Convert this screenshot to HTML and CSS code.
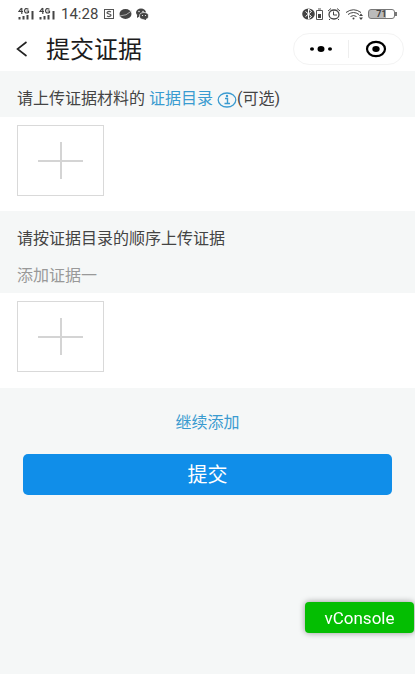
FILE: index.html
```
<!DOCTYPE html>
<html lang="zh-CN">
<head>
<meta charset="utf-8">
<meta name="viewport" content="width=device-width, initial-scale=1">
<title>提交证据</title>
<link rel="stylesheet" href="styles.css">
</head>
<body>
<div class="status">
  <div class="status-group">
    <svg width="38" height="14" viewBox="0 0 38 14" aria-hidden="true">
      <g id="signal" fill="none" stroke="#444">
        <path d="M3.5 1L1 4.500h4M3.800 1v6M10.500 2.200Q7 .3 6.500 3.800Q7 7 10.500 5.500V4H8.500" stroke-width="1.200"/>
        <path d="M1.500 10v2.500M5.500 9v3.500M9.500 8v4.500M14.500 4v8.500" stroke-width="2"/>
      </g>
      <use href="#signal" x="21"/>
    </svg>
    <time class="clock">14:28</time>
    <svg width="46" height="12" viewBox="0 0 46 12" aria-hidden="true">
      <path d="M1 1.500h10M1 10.500h10M1.500 1v10M10.500 1v10" fill="none" stroke="#555"/>
      <path d="M8 4Q6 2.800 4.500 4T6 6t1.500 2T4 8" fill="none" stroke="#555" stroke-width="1.200"/>
      <ellipse cx="22.500" cy="6" rx="6" ry="5" fill="#444"/>
      <path d="M16.500 8q7 0 12-5" fill="none" stroke="#aaa"/>
      <ellipse cx="38" cy="4.500" rx="5" ry="4" fill="#444"/>
      <path d="M34 7v3l3-2z" fill="#444"/>
      <ellipse cx="41" cy="8" rx="4.500" ry="3.500" fill="#444" stroke="#fff" stroke-width=".7"/>
      <path d="M43 10v2l-3-1z" fill="#444"/>
      <g fill="#fff"><circle cx="36" cy="3.500" r=".7"/><circle cx="40" cy="3.500" r=".7"/><circle cx="39.500" cy="7.500" r=".6"/><circle cx="42.500" cy="7.500" r=".6"/></g>
    </svg>
  </div>
  <div class="status-group">
    <svg width="61" height="12" viewBox="0 0 61 12" aria-hidden="true">
      <ellipse cx="6.500" cy="6" rx="6.300" ry="5.500" fill="#444"/>
      <path d="M3.500 3.500l6 5L6.500 11V1l3 2.500-6 5" fill="none" stroke="#fff"/>
      <path d="M14.500 2.500h6v9h-6zM16 1h3" fill="#fff" stroke="#555"/>
      <path d="M16 6h3v4h-3z" fill="#444"/>
      <g fill="none" stroke="#444"><ellipse cx="32" cy="6.500" rx="5" ry="4.500" stroke-width="1.300"/><path d="M31.500 3.500v3.500H35M26 3l3-2.500M38 3l-3-2.500M28 11l-1 1M36 11l1 1"/>
      <path d="M44 4.500Q51.500-1 59 4.500M46 6.500q5.500-4 11 0M48.500 8.500q3-2 6 0"/></g>
      <circle cx="51.500" cy="10.500" r="1" fill="#444"/><path d="M59 5.500L57 8h4zM59 12l-2-2.500h4z" fill="#444"/>
    </svg>
    <span class="battery">71</span>
  </div>
</div>
<header class="nav">
  <button class="back" aria-label="返回"><svg width="12" height="16" viewBox="0 0 12 16"><path d="M10.500 1L1.500 8l9 7" fill="none" stroke="#222" stroke-width="1.600"/></svg></button>
  <h1>提交证据</h1>
  <div class="capsule">
    <button aria-label="更多"><svg width="22" height="8" viewBox="0 0 22 8"><ellipse cx="2" cy="4" rx="2" ry="1.700"/><ellipse cx="11" cy="4" rx="3.500" ry="3"/><ellipse cx="20" cy="4" rx="2" ry="1.700"/></svg></button>
    <button aria-label="关闭"><svg width="22" height="18" viewBox="0 0 22 18"><ellipse cx="11" cy="9" rx="9" ry="7.200" fill="none" stroke="#000" stroke-width="2.200"/><ellipse cx="11" cy="9" rx="3.700" ry="3"/></svg></button>
  </div>
</header>
<main>
  <section>
    <h2 class="heading">请上传证据材料的 <a class="link" href="#catalog">证据目录 <svg class="info" width="20" height="16" viewBox="0 0 20 16" aria-hidden="true"><ellipse cx="10" cy="8" rx="8.800" ry="7" fill="none" stroke="#3a9bd0" stroke-width="1.300"/><path d="M8 6.500h2.500v5M7.500 11.500h5.500" fill="none" stroke="#3a9bd0" stroke-width="1.400"/><circle cx="10" cy="4" r="1.200" fill="#3a9bd0"/></svg></a>(可选)</h2>
    <div class="uploads"><button class="upload" aria-label="上传证据目录"></button></div>
  </section>
  <section>
    <h2 class="heading">请按证据目录的顺序上传证据</h2>
    <h3 class="subheading">添加证据一</h3>
    <div class="uploads second"><button class="upload" aria-label="上传证据一"></button></div>
  </section>
  <div class="actions">
    <button class="more">继续添加</button>
    <button class="submit">提交</button>
  </div>
</main>
<button class="console">vConsole</button>
</body>
</html>
```
FILE: styles.css
```
* { box-sizing: border-box; }
body {
  margin: 0;
  min-height: 100vh;
  background: #f5f7f7;
  color: #444;
  font: 16px/24px Roboto, "Noto Sans CJK SC", sans-serif;
}
button {
  padding: 0;
  border: 0;
  background: none;
  color: inherit;
  font: inherit;
}
h1, h2, h3 { margin: 0; font-weight: 400; }
svg { display: block; }
.status {
  display: flex;
  justify-content: space-between;
  height: 27px;
  padding: 0 20px 0 18px;
  background: #fff;
}
.status-group { display: flex; align-items: center; gap: 5px; }
.clock { font-size: 15px; }
.battery {
  position: relative;
  width: 27px;
  height: 10px;
  border: 1px solid #777;
  border-radius: 3px;
  background: linear-gradient(90deg, #bbb 70%, #fff 70%);
  font-size: 9px;
  font-weight: 700;
  line-height: 8px;
  text-align: center;
}
.battery::after {
  content: "";
  position: absolute;
  top: 2px;
  right: -3px;
  width: 2px;
  height: 4px;
  background: #777;
}
.nav {
  display: flex;
  align-items: center;
  height: 44px;
  padding: 0 11px 0 16px;
  background: #fff;
  color: #1c1c1c;
}
.back { width: 30px; }
.nav h1 { padding-top: 2px; font-size: 24px; line-height: 32px; }
.capsule {
  display: flex;
  align-items: center;
  width: 111px;
  height: 32px;
  margin-left: auto;
  border: 1px solid #f3f3f3;
  border-radius: 16px;
}
.capsule button { display: grid; flex: 1; place-items: center; }
.capsule button + button { border-left: 1px solid #eee; height: 18px; }
.heading {
  height: 46px;
  padding: 16px 17px 0;
  font-size: 16px;
  line-height: 24px;
}
.link { color: #3a9bd0; text-decoration: none; }
.info { display: inline-block; vertical-align: -4px; }
.uploads { padding: 8px 17px 15px; background: #fff; }
.second { padding-bottom: 16px; }
.upload {
  display: block;
  width: 87px;
  height: 71px;
  border: 1px solid #d9d9d9;
  background:
    linear-gradient(#d4d4d4, #d4d4d4) center / 45px 2px no-repeat,
    linear-gradient(#d4d4d4, #d4d4d4) center / 2px 37px no-repeat,
    #fff;
}
.subheading {
  height: 36px;
  padding: 7px 17px 0;
  color: #999;
  font-size: 16px;
  line-height: 24px;
}
.actions { display: grid; gap: 19px; padding: 23px 23px; }
.more { justify-self: center; color: #3a9bd0; }
.submit {
  height: 41px;
  border-radius: 5px;
  background: #108ee9;
  color: #fff;
  font-size: 20px;
}
.console {
  position: fixed;
  right: 1px;
  bottom: 41px;
  width: 109px;
  height: 31px;
  border-radius: 4px;
  background: #04be02;
  box-shadow: 0 0 6px rgba(0, 0, 0, .4);
  color: #fff;
  font-size: 17px;
}
```
